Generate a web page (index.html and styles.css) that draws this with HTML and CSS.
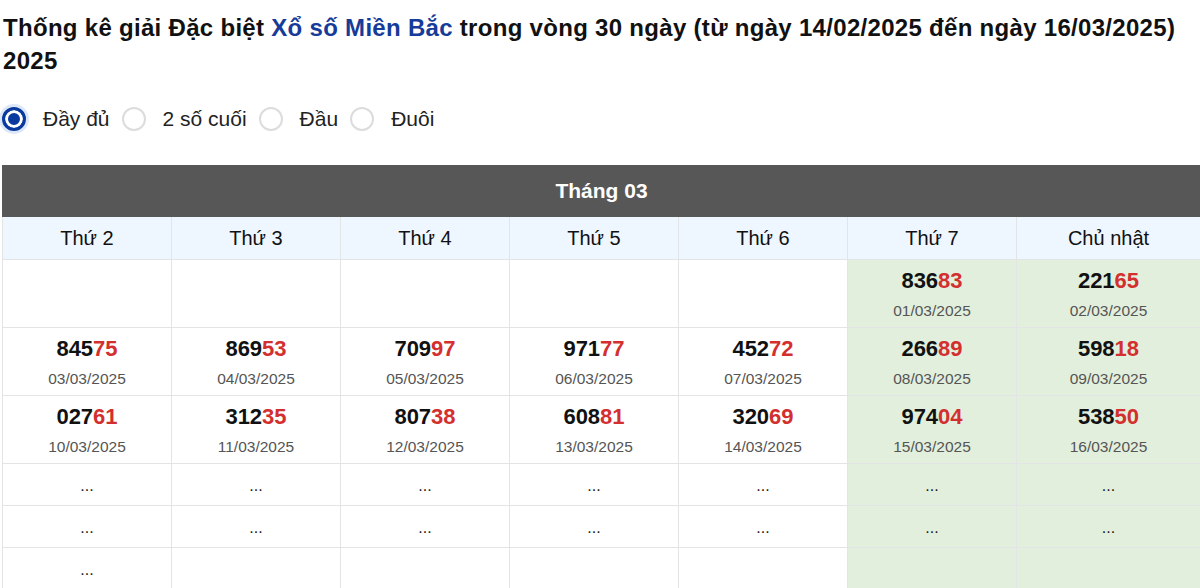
FILE: index.html
```html
<!DOCTYPE html>
<html lang="vi">
<head>
    <meta charset="UTF-8">
    <meta name="viewport" content="width=device-width, initial-scale=1.0">
    <title>Thống kê giải Đặc biệt Xổ số Miền Bắc</title>
    <link rel="stylesheet" href="styles.css">
</head>
<body>
    <div class="page">
        <h1 class="stats-title">
            <span>Thống kê giải Đặc biệt</span> <a href="#" class="region-link">Xổ số Miền Bắc</a> <span>trong vòng 30 ngày (từ ngày 14/02/2025 đến ngày 16/03/2025)</span> <span>2025</span>
        </h1>

        <div class="view-options">
            <label class="option">
                <span class="radio checked"></span>
                <span class="option-text">Đầy đủ</span>
            </label>
            <label class="option">
                <span class="radio"></span>
                <span class="option-text">2 số cuối</span>
            </label>
            <label class="option">
                <span class="radio"></span>
                <span class="option-text">Đầu</span>
            </label>
            <label class="option">
                <span class="radio"></span>
                <span class="option-text">Đuôi</span>
            </label>
        </div>

        <table class="month-table">
            <colgroup>
                <col class="col-day"><col class="col-day"><col class="col-day">
                <col class="col-day"><col class="col-day"><col class="col-day">
                <col class="col-last">
            </colgroup>
            <thead>
                <tr>
                    <th colspan="7" class="month-title">Tháng 03</th>
                </tr>
                <tr class="weekdays">
                    <th>Thứ 2</th>
                    <th>Thứ 3</th>
                    <th>Thứ 4</th>
                    <th>Thứ 5</th>
                    <th>Thứ 6</th>
                    <th>Thứ 7</th>
                    <th>Chủ nhật</th>
                </tr>
            </thead>
            <tbody>
                <tr class="result-row">
                    <td></td>
                    <td></td>
                    <td></td>
                    <td></td>
                    <td></td>
                    <td class="weekend"><div class="number">836<span class="tail">83</span></div><div class="date">01/03/2025</div></td>
                    <td class="weekend"><div class="number">221<span class="tail">65</span></div><div class="date">02/03/2025</div></td>
                </tr>
                <tr class="result-row">
                    <td><div class="number">845<span class="tail">75</span></div><div class="date">03/03/2025</div></td>
                    <td><div class="number">869<span class="tail">53</span></div><div class="date">04/03/2025</div></td>
                    <td><div class="number">709<span class="tail">97</span></div><div class="date">05/03/2025</div></td>
                    <td><div class="number">971<span class="tail">77</span></div><div class="date">06/03/2025</div></td>
                    <td><div class="number">452<span class="tail">72</span></div><div class="date">07/03/2025</div></td>
                    <td class="weekend"><div class="number">266<span class="tail">89</span></div><div class="date">08/03/2025</div></td>
                    <td class="weekend"><div class="number">598<span class="tail">18</span></div><div class="date">09/03/2025</div></td>
                </tr>
                <tr class="result-row">
                    <td><div class="number">027<span class="tail">61</span></div><div class="date">10/03/2025</div></td>
                    <td><div class="number">312<span class="tail">35</span></div><div class="date">11/03/2025</div></td>
                    <td><div class="number">807<span class="tail">38</span></div><div class="date">12/03/2025</div></td>
                    <td><div class="number">608<span class="tail">81</span></div><div class="date">13/03/2025</div></td>
                    <td><div class="number">320<span class="tail">69</span></div><div class="date">14/03/2025</div></td>
                    <td class="weekend"><div class="number">974<span class="tail">04</span></div><div class="date">15/03/2025</div></td>
                    <td class="weekend"><div class="number">538<span class="tail">50</span></div><div class="date">16/03/2025</div></td>
                </tr>
                <tr class="pending-row">
                    <td>...</td>
                    <td>...</td>
                    <td>...</td>
                    <td>...</td>
                    <td>...</td>
                    <td class="weekend">...</td>
                    <td class="weekend">...</td>
                </tr>
                <tr class="pending-row">
                    <td>...</td>
                    <td>...</td>
                    <td>...</td>
                    <td>...</td>
                    <td>...</td>
                    <td class="weekend">...</td>
                    <td class="weekend">...</td>
                </tr>
                <tr class="pending-row">
                    <td>...</td>
                    <td></td>
                    <td></td>
                    <td></td>
                    <td></td>
                    <td class="weekend"></td>
                    <td class="weekend"></td>
                </tr>
            </tbody>
        </table>
    </div>
</body>
</html>
```

FILE: styles.css
```css
* {
    margin: 0;
    padding: 0;
    box-sizing: border-box;
}

html,
body {
    overflow: hidden;
}

body {
    font-family: 'Liberation Sans', Arial, sans-serif;
    color: #111;
    background: #fff;
}

.page {
    padding: 11px 0 0 2px;
}

.stats-title {
    font-size: 24px;
    font-weight: 700;
    line-height: 33px;
    letter-spacing: 0.3px;
    color: #111;
    padding-left: 1px;
}

.region-link {
    color: #163b98;
    text-decoration: none;
}

.view-options {
    display: flex;
    align-items: center;
    margin-top: 30px;
}

.option {
    display: flex;
    align-items: center;
    margin-right: 12px;
    cursor: pointer;
}

.radio {
    width: 24px;
    height: 24px;
    border-radius: 50%;
    border: 2px solid #dcdcdc;
    background: #fff;
    margin-right: 17px;
}

.radio.checked {
    border: 3px solid #0b3a9e;
    background: #0b3a9e;
    box-shadow: inset 0 0 0 3px #fff, 0 0 0 3px rgba(60, 120, 230, 0.18);
}

.option-text {
    font-size: 21px;
    line-height: 24px;
    color: #222;
}

.month-table {
    margin-top: 34px;
    width: 1199px;
    border-collapse: collapse;
    table-layout: fixed;
    text-align: center;
}

.col-day {
    width: 169px;
}

.month-table th,
.month-table td {
    border: 1px solid #e2e4e6;
}

.month-title {
    background: #575757;
    color: #fff;
    font-size: 21px;
    font-weight: 700;
    height: 51px;
    border-color: #575757 !important;
}

.weekdays th {
    background: #eef6ff;
    font-size: 20px;
    font-weight: 400;
    color: #111;
    height: 43px;
}

.result-row td {
    height: 68px;
    padding: 9px 0 4px;
    vertical-align: top;
}

.number {
    font-size: 22px;
    font-weight: 700;
    line-height: 24px;
    color: #111;
}

.tail {
    color: #d32f2f;
}

.date {
    font-size: 15.5px;
    line-height: 20px;
    color: #555;
    margin-top: 8px;
}

.pending-row td {
    height: 42px;
    padding-top: 3px;
    font-size: 16px;
    line-height: 38px;
    color: #222;
}

.month-table td.weekend {
    background: #e2efdc;
}
```
